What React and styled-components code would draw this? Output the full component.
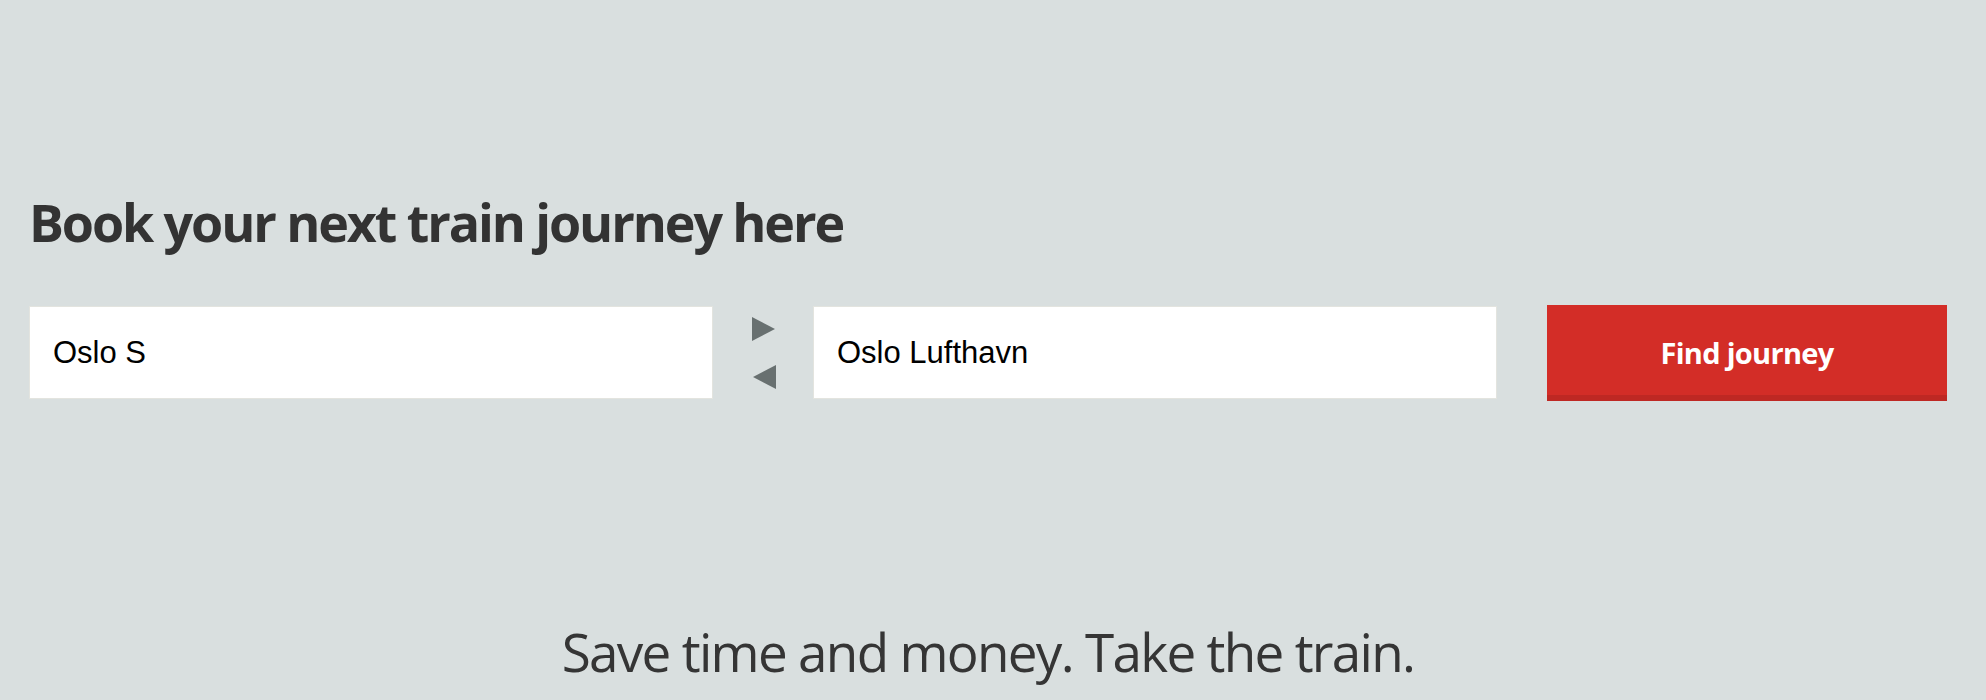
import React from "react";
import styled, { createGlobalStyle } from "styled-components";

const GlobalStyle = createGlobalStyle`
  html, body {
    margin: 0;
    padding: 0;
    background: #d9dfdf;
  }
  body {
    font-family: "Open Sans", "Noto Sans", sans-serif;
    color: #333333;
  }
`;

const Page = styled.main`
  height: 700px;
  overflow: hidden;
  display: flex;
  flex-direction: column;
  padding: 196px 39px 0 29px;
  box-sizing: border-box;
`;

const Heading = styled.h1`
  margin: 0;
  font-family: "Open Sans", "Noto Sans", sans-serif;
  font-weight: 700;
  font-size: 52px;
  line-height: 52px;
  font-stretch: 90%;
  letter-spacing: -2.1px;
  color: #333333;
  white-space: nowrap;
`;

const SearchRow = styled.form`
  margin-top: 58px;
  display: flex;
  align-items: flex-start;
`;

const StationInput = styled.div`
  width: 684px;
  height: 93px;
  box-sizing: border-box;
  background: #ffffff;
  border: 1px solid #e3e4df;
  display: flex;
  align-items: center;
  padding-left: 23px;
  font-family: "Liberation Sans", Arial, sans-serif;
  font-size: 31px;
  color: #000000;
`;

const SwapColumn = styled.div`
  width: 100px;
  height: 93px;
  display: flex;
  flex-direction: column;
  align-items: center;
  justify-content: center;
  gap: 24px;
`;

const Arrow = styled.svg`
  width: 23px;
  height: 24px;
  display: block;
  margin-left: ${(p) => (p.$dir === "left" ? "2px" : "0")};
`;

const FindButton = styled.button`
  margin-left: 50px;
  margin-top: -1px;
  width: 400px;
  height: 96px;
  box-sizing: border-box;
  border: none;
  border-bottom: 6px solid #be2823;
  background: #d32d27;
  color: #ffffff;
  font-family: "Open Sans", "Noto Sans", sans-serif;
  font-weight: 700;
  font-size: 29px;
  font-stretch: 90%;
  letter-spacing: -0.7px;
  padding: 4px 0 0 0;
  cursor: pointer;
`;

const Tagline = styled.p`
  margin: 224px 0 0 0;
  text-align: center;
  font-family: "Open Sans", "Noto Sans", sans-serif;
  font-weight: 400;
  font-size: 53px;
  line-height: 53px;
  font-stretch: 90%;
  letter-spacing: -1.7px;
  color: #353535;
  white-space: nowrap;
`;

function TriangleArrow({ dir }) {
  return (
    <Arrow $dir={dir} viewBox="0 0 23 24" aria-hidden="true">
      {dir === "right" ? (
        <polygon points="0,0 23,12 0,24" fill="#687070" />
      ) : (
        <polygon points="23,0 0,12 23,24" fill="#687070" />
      )}
    </Arrow>
  );
}

export default function App() {
  return (
    <>
      <GlobalStyle />
      <Page>
        <Heading>Book your next train journey here</Heading>
        <SearchRow onSubmit={(e) => e.preventDefault()}>
          <StationInput>Oslo S</StationInput>
          <SwapColumn>
            <TriangleArrow dir="right" />
            <TriangleArrow dir="left" />
          </SwapColumn>
          <StationInput>Oslo Lufthavn</StationInput>
          <FindButton type="submit">Find journey</FindButton>
        </SearchRow>
        <Tagline>Save time and money. Take the train.</Tagline>
      </Page>
    </>
  );
}
